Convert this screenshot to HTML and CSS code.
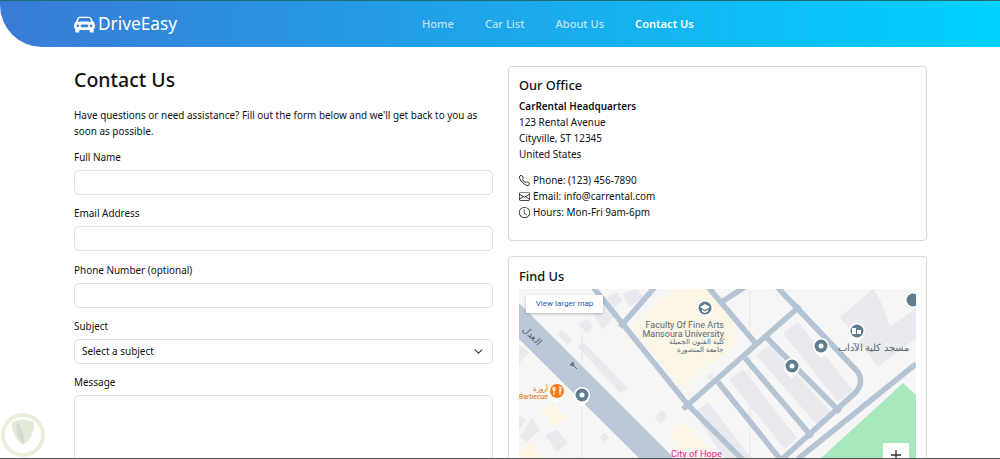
FILE: index.html
```html
<!DOCTYPE html>
<html lang="en">
<head>
    <meta charset="UTF-8">
    <meta name="viewport" content="width=device-width, initial-scale=1.0">
    <title>Contact Us - DriveEasy</title>
    <link rel="stylesheet" href="styles.css">
</head>
<body>
    <header class="navbar">
        <a class="brand" href="#">
            <svg class="brand-icon" viewBox="0 0 16 16"><path fill="currentColor" d="M2.52 3.515A2.5 2.5 0 0 1 4.82 2h6.362c1 0 1.904.596 2.298 1.515l.792 1.848c.075.175.21.319.38.404.5.25.855.715.965 1.262l.335 1.679c.033.161.049.325.049.49v.413c0 .814-.39 1.543-1 1.997V13.5a.5.5 0 0 1-.5.5h-2a.5.5 0 0 1-.5-.5v-1.338c-1.292.048-2.745.088-4 .088s-2.708-.04-4-.088V13.5a.5.5 0 0 1-.5.5h-2a.5.5 0 0 1-.5-.5v-1.892c-.61-.454-1-1.183-1-1.997v-.413a2.5 2.5 0 0 1 .049-.49l.335-1.68c.11-.546.465-1.012.964-1.261a.807.807 0 0 0 .381-.404l.792-1.848ZM3 10a1 1 0 1 0 0-2 1 1 0 0 0 0 2Zm10 0a1 1 0 1 0 0-2 1 1 0 0 0 0 2ZM6 8a1 1 0 0 0 0 2h4a1 1 0 1 0 0-2H6ZM2.906 5.189a.51.51 0 0 0 .497.731c.91-.073 3.35-.17 4.597-.17 1.247 0 3.688.097 4.597.17a.51.51 0 0 0 .497-.731l-.956-1.913A.5.5 0 0 0 11.691 3H4.309a.5.5 0 0 0-.447.276L2.906 5.19Z"/></svg>
            DriveEasy
        </a>
        <nav class="nav-links">
            <a href="#">Home</a>
            <a href="#">Car List</a>
            <a href="#">About Us</a>
            <a class="active" href="#">Contact Us</a>
        </nav>
    </header>

    <main class="content">
        <section class="form-col">
            <h1>Contact Us</h1>
            <p class="intro">Have questions or need assistance? Fill out the form below and we'll get back to you as soon as possible.</p>
            <form>
                <div class="field">
                    <label for="name">Full Name</label>
                    <input class="control" id="name" type="text">
                </div>
                <div class="field">
                    <label for="email">Email Address</label>
                    <input class="control" id="email" type="email">
                </div>
                <div class="field">
                    <label for="phone">Phone Number (optional)</label>
                    <input class="control" id="phone" type="tel">
                </div>
                <div class="field">
                    <label for="subject">Subject</label>
                    <select class="control select" id="subject">
                        <option>Select a subject</option>
                    </select>
                </div>
                <div class="field">
                    <label for="message">Message</label>
                    <textarea class="control message" id="message"></textarea>
                </div>
            </form>
        </section>

        <aside class="info-col">
            <div class="card office">
                <h2>Our Office</h2>
                <address>
                    <strong>CarRental Headquarters</strong><br>
                    123 Rental Avenue<br>
                    Cityville, ST 12345<br>
                    United States
                </address>
                <ul class="contact-list">
                    <li><svg viewBox="0 0 16 16"><path fill="currentColor" d="M3.654 1.328a.678.678 0 0 0-1.015-.063L1.605 2.3c-.483.484-.661 1.169-.45 1.77a17.568 17.568 0 0 0 4.168 6.608 17.569 17.569 0 0 0 6.608 4.168c.601.211 1.286.033 1.77-.45l1.034-1.034a.678.678 0 0 0-.063-1.015l-2.307-1.794a.678.678 0 0 0-.58-.122l-2.19.547a1.745 1.745 0 0 1-1.657-.459L5.482 8.062a1.745 1.745 0 0 1-.46-1.657l.548-2.19a.678.678 0 0 0-.122-.58L3.654 1.328zM1.884.511a1.745 1.745 0 0 1 2.612.163L6.29 2.98c.329.423.445.974.315 1.494l-.547 2.19a.678.678 0 0 0 .178.643l2.457 2.457a.678.678 0 0 0 .644.178l2.189-.547a1.745 1.745 0 0 1 1.494.315l2.306 1.794c.829.645.905 1.87.163 2.611l-1.034 1.034c-.74.74-1.846 1.065-2.877.702a18.634 18.634 0 0 1-7.01-4.42 18.634 18.634 0 0 1-4.42-7.009c-.362-1.03-.037-2.137.703-2.877L1.885.511z"/></svg>Phone: (123) 456-7890</li>
                    <li><svg viewBox="0 0 16 16"><path fill="currentColor" d="M0 4a2 2 0 0 1 2-2h12a2 2 0 0 1 2 2v8a2 2 0 0 1-2 2H2a2 2 0 0 1-2-2V4Zm2-1a1 1 0 0 0-1 1v.217l7 4.2 7-4.2V4a1 1 0 0 0-1-1H2Zm13 2.383-4.708 2.825L15 11.105V5.383Zm-.034 6.876-5.64-3.471L8 9.583l-1.326-.795-5.64 3.47A1 1 0 0 0 2 13h12a1 1 0 0 0 .966-.741ZM1 11.105l4.708-2.897L1 5.383v5.722Z"/></svg>Email: info@carrental.com</li>
                    <li><svg viewBox="0 0 16 16"><path fill="currentColor" d="M8 3.5a.5.5 0 0 0-1 0V9a.5.5 0 0 0 .252.434l3.5 2a.5.5 0 0 0 .496-.868L8 8.71V3.5z"/><path fill="currentColor" d="M8 16A8 8 0 1 0 8 0a8 8 0 0 0 0 16zm7-8A7 7 0 1 1 1 8a7 7 0 0 1 14 0z"/></svg>Hours: Mon-Fri 9am-6pm</li>
                </ul>
            </div>

            <div class="card find-us">
                <h2>Find Us</h2>
                <div class="map">
                    <!-- viewBox uses page coordinates so the drawing is easy to check against the screen -->
                    <svg class="map-canvas" viewBox="519 289 397 240">
                        <rect x="519" y="289" width="397" height="240" fill="#f6f6f6"/>
                        <!-- campus and green -->
                        <polygon points="630,327 673,289 712,289 735,320 735,345 683,388" fill="#fbf6e6"/>
                        <polygon points="820,459 903,383 916,395 916,459" fill="#a8e8bd"/>
                        <polygon points="670,430 683,422 722,459 680,459" fill="#fbf6e6"/>
                        <!-- buildings -->
                        <g fill="#e8eaf0">
                            <polygon points="783,333 798,322 853,390 838,402"/>
                            <polygon points="756,355 770,345 832,413 817,425"/>
                            <polygon points="729,380 743,369 797,438 785,449"/>
                            <polygon points="694,413 708,402 752,459 725,459"/>
                            <polygon points="840,317 873,289 880,300 890,327 916,308 916,338 878,367"/>
                            <polygon points="593,313 607,305 615,317 602,330"/>
                            <polygon points="607,297 617,292 622,300 613,310"/>
                            <polygon points="622,293 637,289 643,297 630,307"/>
                            <polygon points="578,325 587,318 593,327 587,333"/>
                            <polygon points="557,333 562,330 573,340 567,345"/>
                            <polygon points="578,347 583,342 628,388 620,393"/>
                            <polygon points="520,437 532,418 540,430 527,442"/>
                            <polygon points="545,435 557,430 568,443 557,452"/>
                            <polygon points="519,415 526,420 519,430"/>
                            <polygon points="519,345 529,352 519,364"/>
                            <polygon points="655,417 662,410 668,417 660,424"/>
                            <polygon points="600,437 605,433 609,438 604,442"/>
                            <polygon points="707,375 713,372 713,379 708,380"/>
                        </g>
                        <polygon points="540,410 552,403 565,418 555,428" fill="#fdf6e3"/>
                        <polygon points="519,453 530,442 543,459 519,459" fill="#fdf6e3"/>
                        <path d="M582,330 V459 M750,289 V459" stroke="#e6e6e6" stroke-width="1"/>
                        <!-- main road -->
                        <polygon points="519,303 675,459 640,459 519,339" fill="#bcc8d7"/>
                        <!-- side roads -->
                        <g fill="none" stroke="#b4c4d4" stroke-width="5.5">
                            <path d="M593,287 L626,328 L688,405 L745,462"/>
                            <path d="M620,327 L655,287"/>
                            <path d="M708,287 L757,345"/>
                            <path d="M720,303 L745,287"/>
                            <path d="M683,409 L800,306"/>
                            <path d="M777,287 L858,372 Q864,382 856,392 L770,470"/>
                            <path d="M767,338 L840,412"/>
                            <path d="M745,358 L812,437"/>
                            <path d="M718,382 L785,465"/>
                            <path d="M798,459 L916,364"/>
                        </g>
                        <!-- labels -->
                        <text class="map-label" x="724" y="328" text-anchor="end">Faculty Of Fine Arts</text>
                        <text class="map-label" x="724" y="337" text-anchor="end">Mansoura University</text>
                        <text class="map-label-small" x="724" y="344" text-anchor="start" lang="ar" direction="rtl">كلية الفنون الجميلة</text>
                        <text class="map-label-small" x="723" y="352" text-anchor="start" lang="ar" direction="rtl">جامعة المنصورة</text>
                        <text class="map-mosque" x="909" y="351" text-anchor="start" lang="ar" direction="rtl">مسجد كلية الآداب</text>
                        <text class="map-road-name" transform="translate(530 338) rotate(45)" text-anchor="middle" lang="ar" direction="rtl">العدل</text>
                        <text class="map-food" x="548" y="391" text-anchor="start" lang="ar" direction="rtl">أروزة</text>
                        <text class="map-food" x="548" y="399" text-anchor="end">Barbecue</text>
                        <text class="map-hope" x="671" y="457">City of Hope</text>
                        <path d="M574,366 l-4,-1 l3,-3 z M572,364 l5,5" stroke="#62788a" stroke-width="1" fill="#62788a"/>
                        <!-- pins -->
                        <path d="M557,403 l-7,-6 h14 z" fill="#fff"/>
                        <circle cx="557" cy="391" r="7" fill="#f57c1f"/>
                        <path d="M554,387 v8 M560,387 v8 M553,387 v3 h2 v-3 M559,387 h2 v4 h-2" stroke="#fff" stroke-width="1" fill="none"/>
                        <g fill="#fff">
                            <path d="M705,320 l-7,-7 h14 z"/>
                            <path d="M582,407 l-7,-7 h14 z"/>
                            <path d="M821,358 l-7,-7 h14 z"/>
                            <path d="M792,378 l-7,-7 h14 z"/>
                            <path d="M857,343 l-7,-7 h14 z"/>
                            <circle cx="705" cy="308" r="8"/>
                            <circle cx="582" cy="395" r="8"/>
                            <circle cx="821" cy="346" r="8"/>
                            <circle cx="792" cy="366" r="8"/>
                            <circle cx="857" cy="331" r="8"/>
                            <circle cx="913" cy="300" r="8"/>
                        </g>
                        <g fill="#607d8b">
                            <circle cx="705" cy="308" r="6.5"/>
                            <circle cx="582" cy="395" r="6.5"/>
                            <circle cx="821" cy="346" r="6.5"/>
                            <circle cx="792" cy="366" r="6.5"/>
                            <circle cx="857" cy="331" r="6.5"/>
                            <circle cx="913" cy="300" r="6.5"/>
                        </g>
                        <g fill="#fff">
                            <circle cx="582" cy="395" r="2.5"/>
                            <circle cx="821" cy="346" r="2.5"/>
                            <circle cx="792" cy="366" r="2.5"/>
                            <path d="M700,307 l5,-3 l5,3 l-5,3 z M702,309.5 l3,2 l3,-2 v2 l-3,1.5 l-3,-1.5 z"/>
                            <path d="M852,328 h4 v6 h-4 z M857,330 h4 v4 h-4 z"/>
                        </g>
                        <rect x="883" y="443" width="26" height="26" fill="#fff"/>
                        <path d="M896,450 v10 M891,455 h10" stroke="#333" stroke-width="1.3"/>
                    </svg>
                    <a class="larger-map" href="#">View larger map</a>
                </div>
            </div>
        </aside>
    </main>

    <svg class="watermark" viewBox="0 0 48 48">
        <circle cx="23" cy="24" r="20" fill="#fff" stroke="#e8f0dc" stroke-width="4"/>
        <path d="M12,11 Q23,6 34,11 Q35,26 23,34 Q11,26 12,11 z" fill="#e4ead8"/>
        <path d="M17,11 Q25,20 24,33 Q14,25 17,11 z" fill="#cfdad3"/>
    </svg>
    <div class="window-edge"></div>
</body>
</html>
```

FILE: styles.css
```css
* {
    box-sizing: border-box;
}

html, body {
    height: 100%;
    margin: 0;
    overflow: hidden;
}

body {
    background-color: #fff;
    color: #111;
    font-family: 'Noto Sans', sans-serif;
    font-size: 9.93px;
    line-height: 16px;
}

.navbar {
    display: flex;
    align-items: center;
    height: 47px;
    padding-left: 74px;
    background: linear-gradient(90deg, #3a7bd5, #00d2ff);
    border-top: 1px solid #1d6f74;
    border-bottom-left-radius: 42px;
}

.brand {
    display: flex;
    align-items: center;
    gap: 3px;
    width: 348px;
    color: #fff;
    font-size: 17.3px;
    text-decoration: none;
}

.brand-icon {
    width: 21px;
    height: 21px;
}

.nav-links {
    display: flex;
    gap: 31px;
}

.nav-links a {
    color: rgba(255, 255, 255, 0.72);
    font-size: 11.1px;
    font-weight: 500;
    text-decoration: none;
}

.nav-links a.active {
    color: #fff;
    font-weight: 600;
}

.content {
    display: grid;
    grid-template-columns: 419px 419px;
    gap: 15px;
    padding: 19px 73px 0 74px;
}

h1 {
    margin: -1px 0 12px;
    font-size: 19.5px;
    line-height: 30px;
    font-weight: 500;
}

.intro {
    margin: 0 0 10px;
}

.field {
    margin-bottom: 10.3px;
}

label {
    display: block;
    margin-bottom: 5px;
}

.control {
    display: block;
    width: 100%;
    height: 25px;
    padding: 0 7px;
    background-color: #fff;
    border: 1px solid #dee2e6;
    border-radius: 5px;
    color: #111;
    font: inherit;
}

.select {
    appearance: none;
    background-image: url("data:image/svg+xml,%3csvg xmlns='http://www.w3.org/2000/svg' viewBox='0 0 16 16'%3e%3cpath fill='none' stroke='%23343a40' stroke-linecap='round' stroke-linejoin='round' stroke-width='2' d='m2 5 6 6 6-6'/%3e%3c/svg%3e");
    background-repeat: no-repeat;
    background-position: right 8px center;
    background-size: 11px 9px;
}

.message {
    height: 100px;
    resize: none;
}

.info-col {
    display: flex;
    flex-direction: column;
    gap: 15px;
}

.card {
    padding: 10px 10px 0;
    border: 1px solid #d8d8d8;
    border-radius: 4px;
}

.office {
    height: 175px;
    padding-top: 9px;
}

.card h2 {
    margin: 0 0 4px;
    font-size: 12.8px;
    line-height: 18px;
    font-weight: 500;
}

address {
    margin-bottom: 10px;
    font-style: normal;
}

strong {
    font-weight: 600;
}

.contact-list {
    margin: 0;
    padding: 0;
    list-style: none;
}

.contact-list li {
    display: flex;
    align-items: center;
    gap: 3px;
}

.contact-list svg {
    width: 11px;
    height: 11px;
}

.find-us {
    height: 280px;
}

.map {
    position: relative;
    width: 397px;
    height: 240px;
    overflow: hidden;
}

.map-canvas {
    display: block;
    width: 397px;
    height: 240px;
}

.map-label {
    fill: #5b6770;
    font-family: 'Roboto', sans-serif;
    font-size: 9px;
}

.map-mosque {
    fill: #5b6770;
    font-family: 'Noto Sans', sans-serif;
    font-size: 9.6px;
}

.map-label-small {
    fill: #5b6770;
    font-family: 'Noto Sans', sans-serif;
    font-size: 7.4px;
}

.map-road-name {
    fill: #4e5d6b;
    font-family: 'Noto Sans', sans-serif;
    font-size: 9.5px;
}

.map-food {
    fill: #e8710a;
    font-family: 'Roboto', sans-serif;
    font-size: 6.9px;
}

.map-hope {
    fill: #e5249c;
    font-family: 'Roboto', sans-serif;
    font-size: 9.3px;
}

.larger-map {
    position: absolute;
    top: 6px;
    left: 7px;
    width: 77px;
    height: 18px;
    background-color: #fff;
    border-radius: 1px;
    box-shadow: 0 1px 3px rgba(0, 0, 0, 0.25);
    color: #1a5fb4;
    font-family: 'Roboto', sans-serif;
    font-size: 8px;
    line-height: 18px;
    text-align: center;
    text-decoration: none;
}

.watermark {
    position: fixed;
    left: 0;
    bottom: 0;
    width: 48px;
    height: 48px;
}

.window-edge {
    position: fixed;
    left: 0;
    right: 0;
    bottom: 0;
    height: 1px;
    background-color: #555;
}
```
